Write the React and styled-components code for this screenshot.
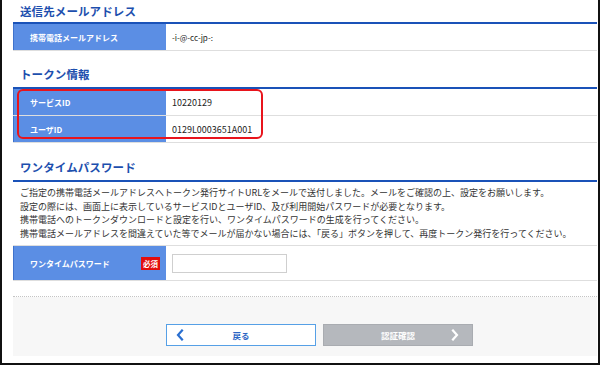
import React from "react";
import styled, { createGlobalStyle } from "styled-components";

const Global = createGlobalStyle`
  html, body { margin: 0; padding: 0; background: #fff; }
  body { font-family: "Noto Sans CJK JP", "Noto Sans", sans-serif; }
  * { box-sizing: border-box; }
`;

const Frame = styled.div`
  width: 600px;
  height: 365px;
  border-left: 2px solid #111;
  border-right: 2px solid #111;
  border-bottom: 2px solid #111;
  background: #fff;
  overflow: hidden;
  display: flex;
  flex-direction: column;
`;

const Main = styled.div`
  padding: 0 1px 0 11px;
  display: flex;
  flex-direction: column;
`;

const Title = styled.h2`
  margin: 0;
  padding: ${(p) => p.$top || 0}px 0 0 7px;
  font-size: 11.5px;
  line-height: ${(p) => p.$lh || 22}px;
  font-weight: 700;
  color: #1d4fae;
  letter-spacing: 0.1px;
`;

const Table = styled.div`
  border-top: 2px solid #1a52b8;
  display: flex;
  flex-direction: column;
`;

const Row = styled.div`
  display: grid;
  grid-template-columns: 153px 1fr;
  height: ${(p) => p.$h || 27}px;
  border-bottom: 1px solid #dedede;
`;

const Label = styled.div`
  background: #5b8ee4;
  border-left: 1px solid #3f72cc;
  color: #fff;
  font-size: 8px;
  font-weight: 700;
  padding: 0 6px 0 16px;
  display: flex;
  align-items: center;
  justify-content: space-between;
`;

const Value = styled.div`
  color: #222;
  font-size: ${(p) => p.$fs || 9}px;
  padding-left: 6px;
  display: flex;
  align-items: center;
`;

const TokenWrap = styled.div`
  position: relative;
`;

const Highlight = styled.div`
  position: absolute;
  left: 4px;
  top: 2px;
  width: 246px;
  height: 50px;
  border: 2px solid #e8141c;
  border-radius: 6px;
  pointer-events: none;
`;

const Notice = styled.div`
  padding: 4px 0 5px 7px;
  font-size: 9px;
  line-height: 13.5px;
  color: #333;
  border-bottom: 1px solid #dedede;
  white-space: nowrap;
`;

const Badge = styled.span`
  background: #e30d0d;
  color: #fff;
  font-size: 7.5px;
  font-weight: 700;
  width: 19px;
  height: 13px;
  display: inline-flex;
  align-items: center;
  justify-content: center;
`;

const Input = styled.input`
  width: 115px;
  height: 19px;
  border: 1px solid #cfcfcf;
  background: #fff;
  margin: 0;
  padding: 0 4px;
`;

const Dotted = styled.div`
  margin: 15px 1px 0 11px;
  border-top: 1px dotted #c4c4c4;
`;

const Footer = styled.div`
  margin: 0 1px 0 11px;
  height: 59px;
  background: #f7f7f7;
  display: flex;
  justify-content: center;
  align-items: flex-start;
  gap: 7px;
  padding: 27px 0 0 29px;
`;

const Button = styled.button`
  width: 150px;
  height: 22px;
  margin: 0;
  padding: 0 9px;
  border: 1px solid ${(p) => (p.$primary ? "#a9acb1" : "#56a0e6")};
  background: ${(p) => (p.$primary ? "#b5b8bd" : "#fff")};
  color: ${(p) => (p.$primary ? "#fff" : "#2c66c4")};
  font-family: "Noto Sans CJK JP", sans-serif;
  font-size: 8.5px;
  font-weight: 700;
  display: grid;
  grid-template-columns: 12px 1fr 12px;
  align-items: center;
`;

const Chevron = ({ dir, color }) => (
  <svg width="8" height="12" viewBox="0 0 8 12">
    <polyline
      points={dir === "left" ? "6,1.5 2,6 6,10.5" : "2,1.5 6,6 2,10.5"}
      fill="none"
      stroke={color}
      strokeWidth="2.2"
      strokeLinecap="square"
    />
  </svg>
);

export default function App() {
  return (
    <>
      <Global />
      <Frame>
        <Main>
          <Title>送信先メールアドレス</Title>
          <Table>
            <Row>
              <Label>携帯電話メールアドレス</Label>
              <Value $fs={8}>-i-@-cc-jp-:</Value>
            </Row>
          </Table>

          <Title $top={10} $lh={26}>トークン情報</Title>
          <TokenWrap>
            <Table>
              <Row>
                <Label>サービスID</Label>
                <Value>10220129</Value>
              </Row>
              <Row>
                <Label>ユーザID</Label>
                <Value>0129L0003651A001</Value>
              </Row>
            </Table>
            <Highlight />
          </TokenWrap>

          <Title $top={11} $lh={26}>ワンタイムパスワード</Title>
          <Table>
            <Notice>
              ご指定の携帯電話メールアドレスへトークン発行サイトURLをメールで送付しました。メールをご確認の上、設定をお願いします。
              <br />
              設定の際には、画面上に表示しているサービスIDとユーザID、及び利用開始パスワードが必要となります。
              <br />
              携帯電話へのトークンダウンロードと設定を行い、ワンタイムパスワードの生成を行ってください。
              <br />
              携帯電話メールアドレスを間違えていた等でメールが届かない場合には、「戻る」ボタンを押して、再度トークン発行を行ってください。
            </Notice>
            <Row $h={35}>
              <Label>
                ワンタイムパスワード<Badge>必須</Badge>
              </Label>
              <Value>
                <Input type="text" />
              </Value>
            </Row>
          </Table>
        </Main>
        <Dotted />
        <Footer>
          <Button>
            <Chevron dir="left" color="#2a6fd0" />
            <span>戻る</span>
            <span />
          </Button>
          <Button $primary>
            <span />
            <span>認証確認</span>
            <Chevron dir="right" color="#fff" />
          </Button>
        </Footer>
      </Frame>
    </>
  );
}
